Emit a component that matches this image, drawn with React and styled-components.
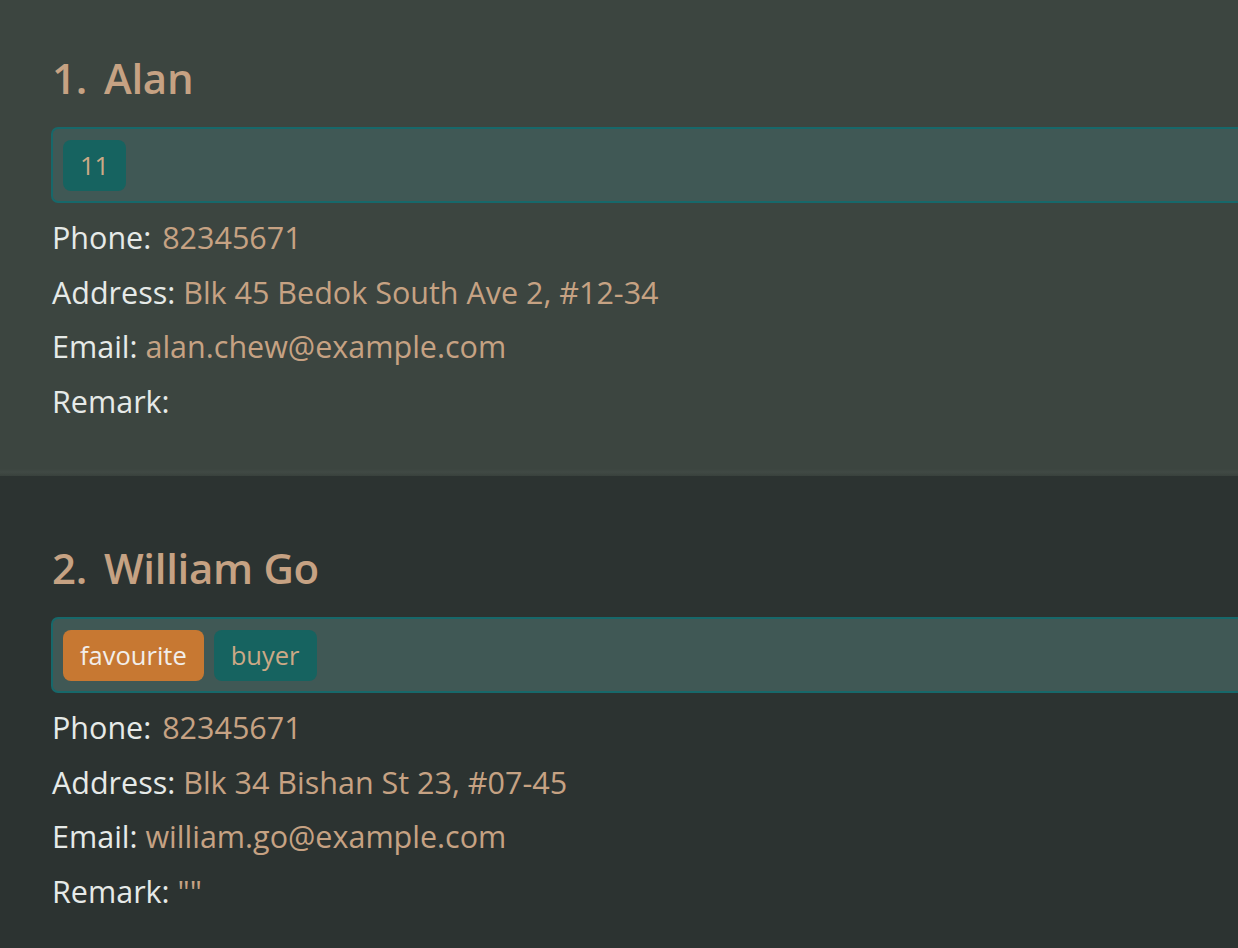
import React from "react";
import styled, { createGlobalStyle } from "styled-components";

const Global = createGlobalStyle`
  html, body { margin: 0; padding: 0; background: #2c3331; }
  body { font-family: "Open Sans", "Noto Sans", sans-serif; }
  #root { height: 948px; overflow: hidden; }
`;

const Viewport = styled.div`
  width: 1238px;
  height: 948px;
  overflow: hidden;
  background: #2c3331;
`;

const List = styled.div`
  display: flex;
  flex-direction: column;
  margin-top: -14px;
`;

const Cell = styled.div`
  height: 490px;
  box-sizing: border-box;
  padding: 62px 0 0 51px;
  background: ${(p) => (p.$odd ? "#3c4540" : "#2c3331")};
  ${(p) =>
    p.$odd &&
    `background-image: linear-gradient(to bottom, rgba(0,0,0,0) 0, rgba(0,0,0,0) 483px, rgba(255,255,255,0.025) 486px, rgba(0,0,0,0.05) 490px);`}
  display: flex;
  flex-direction: column;
`;

const Title = styled.div`
  font-size: 42px;
  font-weight: 600;
  letter-spacing: -0.3px;
  color: #c6a283;
  line-height: 60px;
  padding-left: 1px;
  display: flex;
  gap: 17px;
`;

const TagBar = styled.div`
  margin-top: 19px;
  height: 72px;
  border: 2px solid #17686a;
  border-right: none;
  border-radius: 7px 0 0 7px;
  background: #405855;
  display: flex;
  align-items: center;
  gap: 10px;
  padding-left: 10px;
`;

const Tag = styled.span`
  height: 51px;
  box-sizing: border-box;
  padding: 0 17px;
  display: flex;
  align-items: center;
  border-radius: 8px;
  font-size: 25.5px;
  background: ${(p) => (p.$fav ? "#c77832" : "#166360")};
  color: ${(p) => (p.$fav ? "#f2eeea" : "#cba986")};
`;

const Fields = styled.div`
  display: flex;
  flex-direction: column;
  padding-left: 1px;
  margin-top: 7px;
`;

const Row = styled.div`
  font-size: 30.5px;
  line-height: 54.5px;
  color: #e6eae8;
  white-space: nowrap;
`;

const Value = styled.span`
  color: #c6a283;
  margin-left: ${(p) => p.$shift || 0}px;
`;

const people = [
  {
    name: "Alan",
    tags: [{ t: "11" }],
    phone: "82345671",
    address: "Blk 45 Bedok South Ave 2, #12-34",
    email: "alan.chew@example.com",
    remark: "",
  },
  {
    name: "William Go",
    tags: [{ t: "favourite", fav: true }, { t: "buyer" }],
    phone: "82345671",
    address: "Blk 34 Bishan St 23, #07-45",
    email: "william.go@example.com",
    remark: '""',
  },
];

export default function App() {
  return (
    <>
      <Global />
      <Viewport>
        <List>
          {people.map((p, i) => (
            <Cell key={i} $odd={i % 2 === 0}>
              <Title>
                <span>{i + 1}.</span>
                <span>{p.name}</span>
              </Title>
              <TagBar>
                {p.tags.map((t) => (
                  <Tag key={t.t} $fav={t.fav}>
                    {t.t}
                  </Tag>
                ))}
              </TagBar>
              <Fields>
                <Row>
                  Phone: <Value $shift={3}>{p.phone}</Value>
                </Row>
                <Row>
                  Address: <Value>{p.address}</Value>
                </Row>
                <Row>
                  Email: <Value>{p.email}</Value>
                </Row>
                <Row>
                  Remark: <Value>{p.remark}</Value>
                </Row>
              </Fields>
            </Cell>
          ))}
        </List>
      </Viewport>
    </>
  );
}
